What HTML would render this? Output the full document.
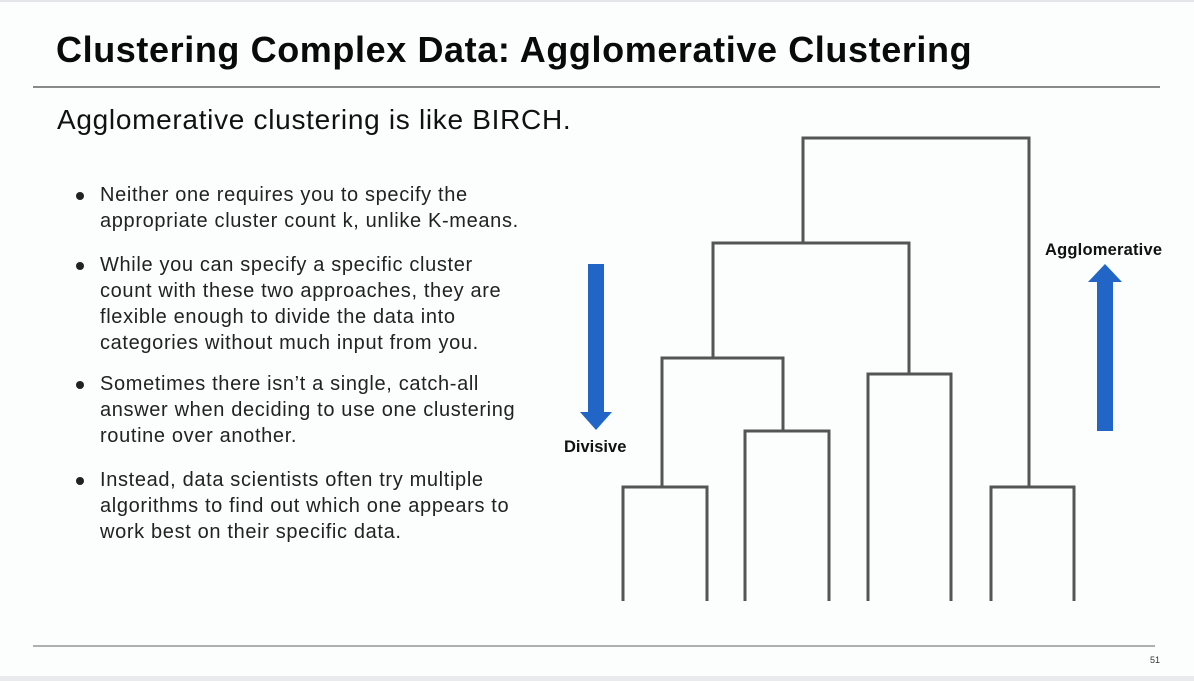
<!DOCTYPE html>
<html><head><meta charset="utf-8"><style>
html,body{margin:0;padding:0;}
body{width:1194px;height:681px;background:#fcfdfd;position:relative;overflow:hidden;font-family:"Liberation Sans",Arial,sans-serif;color:#111;}
.t{position:absolute;white-space:nowrap;}
.b{position:absolute;left:100px;font-size:20px;letter-spacing:0.65px;line-height:26px;color:#222;white-space:nowrap;}
.dot{position:absolute;left:76px;width:8px;height:8px;border-radius:50%;background:#222;}
</style></head><body>
<div style="position:absolute;left:0;top:0;width:1194px;height:2px;background:#e3e5e8"></div>
<div style="position:absolute;left:0;top:676px;width:1194px;height:5px;background:#e8eaec"></div>
<div class="t" style="left:56px;top:29px;font-size:36px;font-weight:bold;letter-spacing:0.6px;color:#0a0a0a">Clustering Complex Data: Agglomerative Clustering</div>
<div style="position:absolute;left:33px;top:86px;width:1127px;height:2px;background:#8a8a8a"></div>
<div class="t" style="left:57px;top:104px;font-size:28px;letter-spacing:0.7px;color:#111">Agglomerative clustering is like BIRCH.</div>
<div class="dot" style="top:192px"></div>
<div class="b" style="top:182px">Neither one requires you to specify the<br>appropriate cluster count k, unlike K-means.</div>
<div class="dot" style="top:262px"></div>
<div class="b" style="top:252px">While you can specify a specific cluster<br>count with these two approaches, they are<br>flexible enough to divide the data into<br>categories without much input from you.</div>
<div class="dot" style="top:381px"></div>
<div class="b" style="top:371px">Sometimes there isn’t a single, catch-all<br>answer when deciding to use one clustering<br>routine over another.</div>
<div class="dot" style="top:477px"></div>
<div class="b" style="top:467px">Instead, data scientists often try multiple<br>algorithms to find out which one appears to<br>work best on their specific data.</div>
<svg style="position:absolute;left:0;top:0" width="1194" height="681">
<g fill="none" stroke="#555" stroke-width="3">
<path d="M803 243V138H1029V487"/>
<path d="M713 358V243H909V374"/>
<path d="M662 487V358H783V431"/>
<path d="M745 601V431H829V601"/>
<path d="M868 601V374H951V601"/>
<path d="M623 601V487H707V601"/>
<path d="M991 601V487H1074V601"/>
</g>
<path d="M588 264H604V412H612L596 430L580 412H588Z" fill="#2166c6"/>
<path d="M1097 431H1113V282H1122L1105 264L1088 282H1097Z" fill="#2166c6"/>
<text x="564" y="452" font-size="16.5" font-weight="bold" font-family="Liberation Sans,sans-serif" fill="#111">Divisive</text>
<text x="1045" y="255" font-size="16.5" letter-spacing="0.2" font-weight="bold" font-family="Liberation Sans,sans-serif" fill="#111">Agglomerative</text>
<text x="1150" y="663" font-size="9" font-family="Liberation Sans,sans-serif" fill="#333">51</text>
</svg>
<div style="position:absolute;left:33px;top:645px;width:1122px;height:2px;background:#b0b0b0"></div>
</body></html>
